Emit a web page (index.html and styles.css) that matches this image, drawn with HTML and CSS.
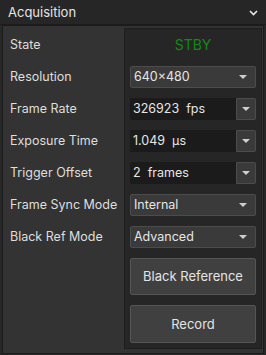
FILE: index.html
```html
<!DOCTYPE html>
<html>
<head>
<meta charset="utf-8">
<link rel="stylesheet" href="styles.css">
</head>
<body>
<div class="header">
  <span class="title">Acquisition</span>
  <svg class="chev" width="9" height="6" viewBox="0 0 9 6"><path d="M1 1 L4.5 4.5 L8 1" fill="none" stroke="#e8e8e8" stroke-width="1.6"/></svg>
</div>
<div class="panel">
  <div class="labels">
    <div class="lbl">State</div>
    <div class="lbl">Resolution</div>
    <div class="lbl">Frame Rate</div>
    <div class="lbl">Exposure Time</div>
    <div class="lbl">Trigger Offset</div>
    <div class="lbl">Frame Sync Mode</div>
    <div class="lbl">Black Ref Mode</div>
  </div>
  <div class="controls">
    <div class="state">STBY</div>
    <div class="combo"><span>640×480</span><i class="arrow"></i></div>
    <div class="spin"><span class="val">326923&nbsp; fps</span><span class="btn"><i class="arrow"></i></span></div>
    <div class="spin"><span class="val">1.049&nbsp; µs</span><span class="btn"><i class="arrow"></i></span></div>
    <div class="spin"><span class="val">2&nbsp; frames</span><span class="btn"><i class="arrow"></i></span></div>
    <div class="combo"><span>Internal</span><i class="arrow"></i></div>
    <div class="combo"><span>Advanced</span><i class="arrow"></i></div>
    <div class="pbtn">Black Reference</div>
    <div class="pbtn">Record</div>
  </div>
</div>
</body>
</html>
```
FILE: styles.css
```css
* { box-sizing: border-box; }
html, body { margin: 0; padding: 0; }
body {
  width: 266px;
  height: 355px;
  background: #272727;
  font-family: Inter, "Noto Sans", sans-serif;
  font-size: 12.5px;
  color: #dcdcdc;
  overflow: hidden;
}
.header {
  height: 25px;
  border-bottom: 1px solid #1c1c1c;
  display: flex;
  align-items: center;
  justify-content: space-between;
  padding: 0 8px 0 8px;
  background: #262626;
}
.title { font-size: 13px; color: #e4e4e4; }
.chev { display: block; margin-top: 1px; }
.panel {
  margin: 0 2px 0 2px;
  height: 329px;
  border: 1px solid #1b1b1b;
  background: #333333;
  display: flex;
  padding: 2px 1px 4px 0;
}
.labels {
  width: 121px;
  padding: 6px 0 0 7px;
  display: flex;
  flex-direction: column;
  gap: 10px;
}
.lbl {
  height: 22px;
  line-height: 22px;
  color: #dedede;
}
.controls {
  flex: 1;
  background: #262626;
  border: 1px solid #1e1e1e;
  padding: 5px 5px 5px 5px;
  display: flex;
  flex-direction: column;
  gap: 10px;
}
.state {
  height: 22px;
  line-height: 22px;
  text-align: center;
  color: #138a13;
  font-size: 14px;
}
.combo {
  height: 22px;
  background: #3a3a3a;
  border: 1px solid #4c4c4c;
  border-radius: 2px;
  display: flex;
  align-items: center;
  justify-content: space-between;
  padding: 0 8px 0 3px;
  color: #e6e6e6;
}
.arrow {
  display: block;
  width: 0;
  height: 0;
  border-left: 4px solid transparent;
  border-right: 4px solid transparent;
  border-top: 4px solid #cfcfcf;
}
.spin {
  height: 22px;
  display: flex;
}
.spin .val {
  flex: 1;
  background: #1b1b1b;
  border-radius: 2px 0 0 2px;
  line-height: 22px;
  padding-left: 3px;
  color: #e6e6e6;
}
.spin .btn {
  width: 20px;
  background: #3a3a3a;
  border: 1px solid #4c4c4c;
  border-radius: 0 2px 2px 0;
  display: flex;
  align-items: center;
  justify-content: center;
}
.pbtn {
  height: 38px;
  background: #404040;
  border: 1px solid #555555;
  border-radius: 2px;
  display: flex;
  align-items: center;
  justify-content: center;
  color: #e4e4e4;
  font-size: 13px;
}
```
